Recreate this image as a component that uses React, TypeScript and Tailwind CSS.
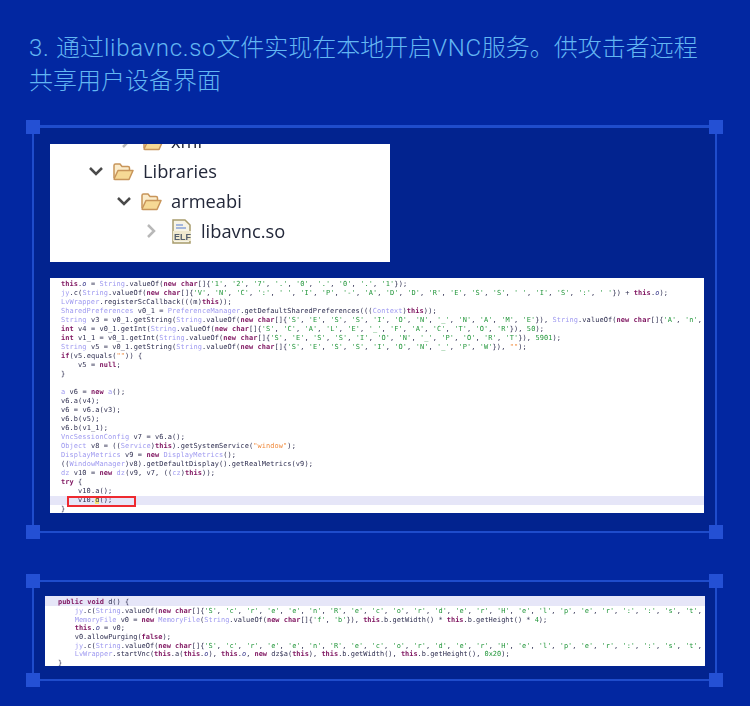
import type { ReactNode } from 'react'

const cornerClass = 'absolute w-3.5 h-3.5 bg-[#2450d4]'

const keywords = new Set(['new', 'char', 'int', 'this', 'if', 'null', 'false', 'try', 'public', 'void'])
const types = new Set([
  'String', 'SharedPreferences', 'PreferenceManager', 'Context', 'LvWrapper', 'VncSessionConfig', 'Object',
  'Service', 'DisplayMetrics', 'WindowManager', 'MemoryFile', 'jy', 'dz', 'cz', 'a',
])

const codeOne = [
  `this.o = String.valueOf(new char[]{'1', '2', '7', '.', '0', '.', '0', '.', '1'});`,
  `jy.c(String.valueOf(new char[]{'V', 'N', 'C', ':', ' ', 'I', 'P', '-', 'A', 'D', 'D', 'R', 'E', 'S', 'S', ' ', 'I', 'S', ':', ' '}) + this.o);`,
  `LvWrapper.registerScCallback(((m)this));`,
  `SharedPreferences v0_1 = PreferenceManager.getDefaultSharedPreferences(((Context)this));`,
  `String v3 = v0_1.getString(String.valueOf(new char[]{'S', 'E', 'S', 'S', 'I', 'O', 'N', '_', 'N', 'A', 'M', 'E'}), String.valueOf(new char[]{'A', 'n',`,
  `int v4 = v0_1.getInt(String.valueOf(new char[]{'S', 'C', 'A', 'L', 'E', '_', 'F', 'A', 'C', 'T', 'O', 'R'}), 50);`,
  `int v1_1 = v0_1.getInt(String.valueOf(new char[]{'S', 'E', 'S', 'S', 'I', 'O', 'N', '_', 'P', 'O', 'R', 'T'}), 5901);`,
  `String v5 = v0_1.getString(String.valueOf(new char[]{'S', 'E', 'S', 'S', 'I', 'O', 'N', '_', 'P', 'W'}), "");`,
  `if(v5.equals("")) {`,
  `    v5 = null;`,
  `}`,
  ``,
  `a v6 = new a();`,
  `v6.a(v4);`,
  `v6 = v6.a(v3);`,
  `v6.b(v5);`,
  `v6.b(v1_1);`,
  `VncSessionConfig v7 = v6.a();`,
  `Object v8 = ((Service)this).getSystemService("window");`,
  `DisplayMetrics v9 = new DisplayMetrics();`,
  `((WindowManager)v8).getDefaultDisplay().getRealMetrics(v9);`,
  `dz v10 = new dz(v9, v7, ((cz)this));`,
  `try {`,
  `    v10.a();`,
  `    v10.d();`,
  `}`,
]

const screenChars = `'S', 'c', 'r', 'e', 'e', 'n', 'R', 'e', 'c', 'o', 'r', 'd', 'e', 'r', 'H', 'e', 'l', 'p', 'e', 'r', ':', ':', 's', 't',`

const codeTwo = [
  `public void d() {`,
  `    jy.c(String.valueOf(new char[]{${screenChars}`,
  `    MemoryFile v0 = new MemoryFile(String.valueOf(new char[]{'f', 'b'}), this.b.getWidth() * this.b.getHeight() * 4);`,
  `    this.o = v0;`,
  `    v0.allowPurging(false);`,
  `    jy.c(String.valueOf(new char[]{${screenChars}`,
  `    LvWrapper.startVnc(this.a(this.o), this.o, new dz$a(this), this.b.getWidth(), this.b.getHeight(), 0x20);`,
  `}`,
]

// rough java colouring, same colours as the eclipse theme in the picture
function colorize(line: string): ReactNode[] {
  const parts = line.match(/'.'|"[^"]*"|0x\d+|\b\d+\b|[A-Za-z_$][\w$]*|\s+|./g) ?? []
  return parts.map((part, i) => {
    if (keywords.has(part)) return <span key={i} className="font-bold text-[#7f1560]">{part}</span>
    if (types.has(part) && parts[i - 1] !== '.') return <span key={i} className="text-[#9f9af0]">{part}</span>
    if (part.startsWith("'") || /^(0x)?\d+$/.test(part)) return <span key={i} className="text-[#22963a]">{part}</span>
    if (part.startsWith('"')) return <span key={i} className="text-[#f08a3c]">{part}</span>
    if (part === 'o' && parts[i - 1] === '.') return <span key={i} className="italic text-[#3a3a8c]">{part}</span>
    return <span key={i}>{part}</span>
  })
}

function Folder() {
  return (
    <svg width="23" height="19" viewBox="0 0 23 19" className="shrink-0">
      <path d="M2 16V3.5Q2 2 3.5 2H8l2 2.5h6q1.500 0 1.500 1.500V8" fill="#fbeccb" stroke="#c8955a" strokeWidth="1.500" />
      <path d="M2 17 6 8.500h15L17 17.500H3Z" fill="#f6d995" stroke="#c8955a" strokeWidth="1.500" strokeLinejoin="round" />
    </svg>
  )
}

function ElfFile() {
  return (
    <svg width="19" height="25" viewBox="0 0 19 25" className="shrink-0">
      <path d="M1 1h12l5 5v18H1Z" fill="#f7f4e6" stroke="#a89c6c" strokeWidth="1.500" />
      <path d="M4 6h7M4 9h10" stroke="#8aa3d8" strokeWidth="1.500" />
      <rect x="1" y="12" width="18" height="10" fill="#efe9cf" />
      <text x="2" y="21" fontSize="9" fontWeight="700" fill="#55606e" fontFamily="Liberation Sans, sans-serif">ELF</text>
    </svg>
  )
}

function Chevron({ open, light }: { open: boolean; light?: boolean }) {
  return (
    <svg width="16" height="16" viewBox="0 0 16 16" className="shrink-0">
      <path
        d={open ? 'M2 5l6 6 6-6' : 'M5 2l6 6-6 6'}
        fill="none"
        stroke={light ? '#b8b8b8' : '#4a4a4a'}
        strokeWidth="2.500"
      />
    </svg>
  )
}

function TreeRow({ pl, children }: { pl: string; children: ReactNode }) {
  return <div className={`flex items-center h-[30px] ${pl}`}>{children}</div>
}

function Frame({ className, children }: { className: string; children: ReactNode }) {
  return (
    <div className={`relative ml-8 w-[685px] bg-[#02238f] border-solid border-[#1f4ccb] ${className}`}>
      <div className={`${cornerClass} -left-2 -top-2`} />
      <div className={`${cornerClass} -right-2 -top-2`} />
      <div className={`${cornerClass} -left-2 -bottom-2`} />
      <div className={`${cornerClass} -right-2 -bottom-2`} />
      {children}
    </div>
  )
}

function Latin({ children }: { children: ReactNode }) {
  return <span className="tracking-[0.7px]">{children}</span>
}

const monoClass = "font-['DejaVu_Sans_Mono',monospace] text-[6.95px] text-[#2e2e50] whitespace-pre blur-[0.4px]"

export default function App() {
  return (
    <div className="min-h-[706px] overflow-hidden bg-[#0227a1]">
      <h2 className="pt-[32px] pl-[29px] pr-6 pb-[27px] text-2xl leading-[33px] font-light text-[#62b6f2] font-['Roboto','Noto_Sans_CJK_SC',sans-serif]">
        <Latin>3. </Latin>通过<Latin>libavnc.so</Latin>文件实现在本地开启<Latin>VNC</Latin>服务。供攻击者远程
        <br />
        共享用户设备界面
      </h2>

      {/* First frame: project tree and the onCreate dump */}
      <Frame className="h-[408px] border-t-[3px] border-l-2 border-r-2 border-b-2 pl-4 pr-[11px] pt-4">
        <div className="w-[340px] h-[118px] overflow-hidden bg-white pl-[38px] font-['Open_Sans',sans-serif] text-[18.3px] text-[#23283a] blur-[0.4px]">
          <div className="-mt-[18px]">
            <TreeRow pl="pl-[30px]">
              <Chevron open={false} light />
              <div className="ml-2"><Folder /></div>
              <span className="ml-1.5">xml</span>
            </TreeRow>
            <TreeRow pl="">
              <Chevron open />
              <div className="ml-2"><Folder /></div>
              <span className="ml-2">Libraries</span>
            </TreeRow>
            <TreeRow pl="pl-7">
              <Chevron open />
              <div className="ml-2"><Folder /></div>
              <span className="ml-2">armeabi</span>
            </TreeRow>
            <TreeRow pl="pl-[55px]">
              <Chevron open={false} light />
              <div className="ml-[13px]"><ElfFile /></div>
              <span className="ml-2.5">libavnc.so</span>
            </TreeRow>
          </div>
        </div>

        <div className="relative mt-4 w-[654px] h-[235px] overflow-hidden bg-white pt-0.5">
          {codeOne.map((line, i) => (
            <div key={i} className={i === 24 ? 'bg-[#e6e6f8]' : ''}>
              <div className={`h-[9px] leading-[9px] pl-[11px] tracking-[0.09px] ${monoClass}`}>
                {i === 24 ? (
                  <>
                    {'    v10.'}
                    <span className="bg-[#f5e67a]">d</span>
                    {'();'}
                  </>
                ) : (
                  colorize(line)
                )}
              </div>
            </div>
          ))}
          {/* red marker round the call */}
          <div className="absolute left-[17px] top-[218px] w-[69px] h-[11px] border-2 border-[#ee2a30]" />
        </div>
      </Frame>

      {/* Second frame: the d() method */}
      <Frame className="h-[101px] mt-[47px] border-2 pl-[11px] pr-2.5 pt-3.5">
        <div className="w-[660px] h-[70px] overflow-hidden bg-white">
          {codeTwo.map((line, i) => (
            <div
              key={i}
              className={`pl-[13px] ${i === 0 ? 'h-2.5 bg-[#e6e6f8] leading-3' : 'h-[8.7px] leading-[10px]'} ${monoClass}`}
            >
              {colorize(line)}
            </div>
          ))}
        </div>
      </Frame>
    </div>
  )
}
